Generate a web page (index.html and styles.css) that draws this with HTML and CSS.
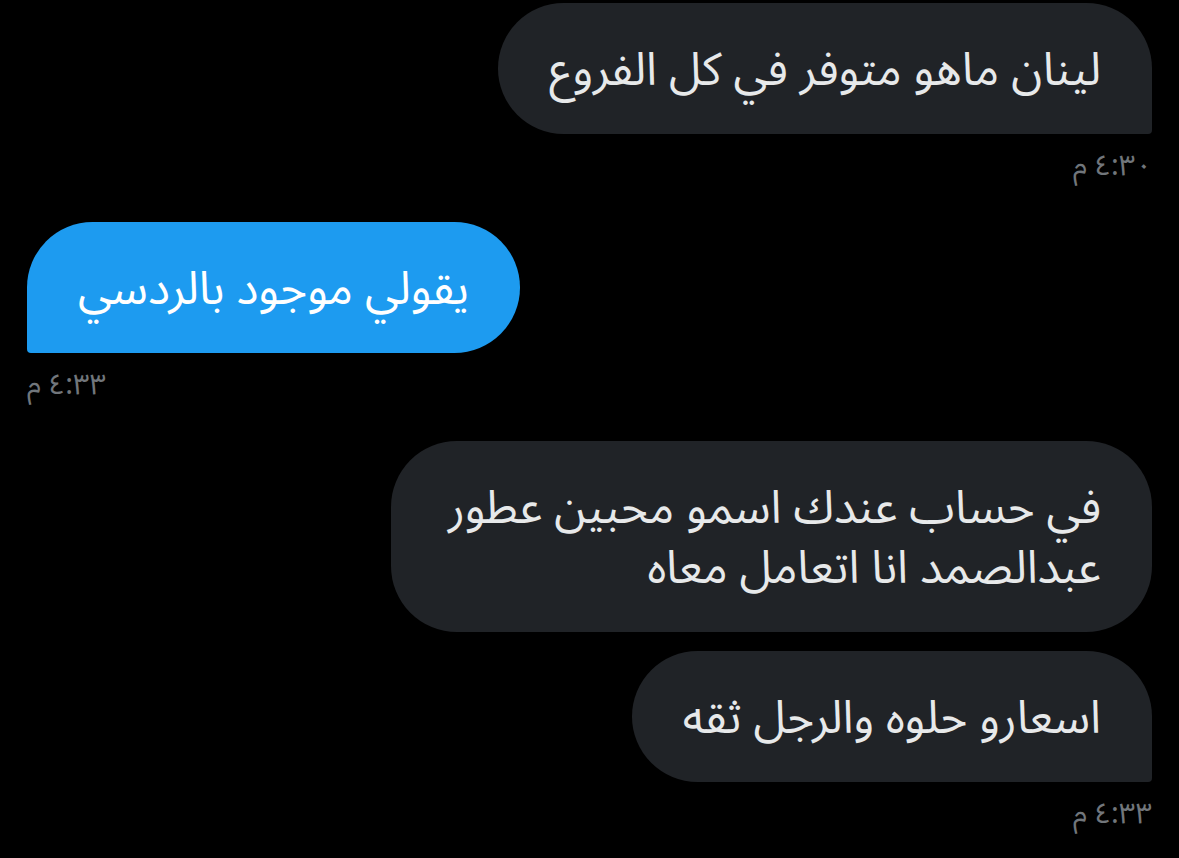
FILE: index.html
```html
<!DOCTYPE html>
<html lang="ar" dir="rtl">
<head>
    <meta charset="UTF-8">
    <meta name="viewport" content="width=device-width, initial-scale=1.0">
    <title>محادثة</title>
    <link rel="stylesheet" href="styles.css">
</head>
<body>
    <div class="chat">
        <div class="msg sent">
            <div class="bubble tail">لينان ماهو متوفر في كل الفروع</div>
            <div class="time">٤:٣٠ م</div>
        </div>

        <div class="msg received">
            <div class="bubble tail">يقولي موجود بالردسي</div>
            <div class="time">٤:٣٣ م</div>
        </div>

        <div class="msg sent grouped">
            <div class="bubble">في حساب عندك اسمو محبين عطور عبدالصمد انا اتعامل معاه</div>
        </div>

        <div class="msg sent">
            <div class="bubble tail">اسعارو حلوه والرجل ثقه</div>
            <div class="time">٤:٣٣ م</div>
        </div>
    </div>
</body>
</html>
```

FILE: styles.css
```css
body {
    margin: 0;
    padding: 0;
    background-color: #000000;
    font-family: "Noto Sans Arabic", "DejaVu Sans", sans-serif;
    color: #e7e9ea;
}
.chat {
    display: flex;
    flex-direction: column;
    padding: 3px 27px;
}
.msg {
    display: flex;
    flex-direction: column;
    margin-bottom: 39px;
}
.msg.sent {
    align-items: flex-start;
}
.msg.received {
    align-items: flex-end;
}
.msg.grouped {
    margin-bottom: 19px;
}
.bubble {
    max-width: 659px;
    padding: 38px 51px 33px 51px;
    font-size: 46px;
    line-height: 60px;
    border-radius: 66px;
    background-color: #202327;
}
.sent .bubble.tail {
    border-radius: 66px 66px 4px 66px;
}
.received .bubble {
    background-color: #1d9bf0;
    color: #ffffff;
    border-radius: 66px 66px 66px 4px;
}
.time {
    margin-top: 15px;
    font-size: 29px;
    line-height: 34px;
    color: #71767b;
}
```
